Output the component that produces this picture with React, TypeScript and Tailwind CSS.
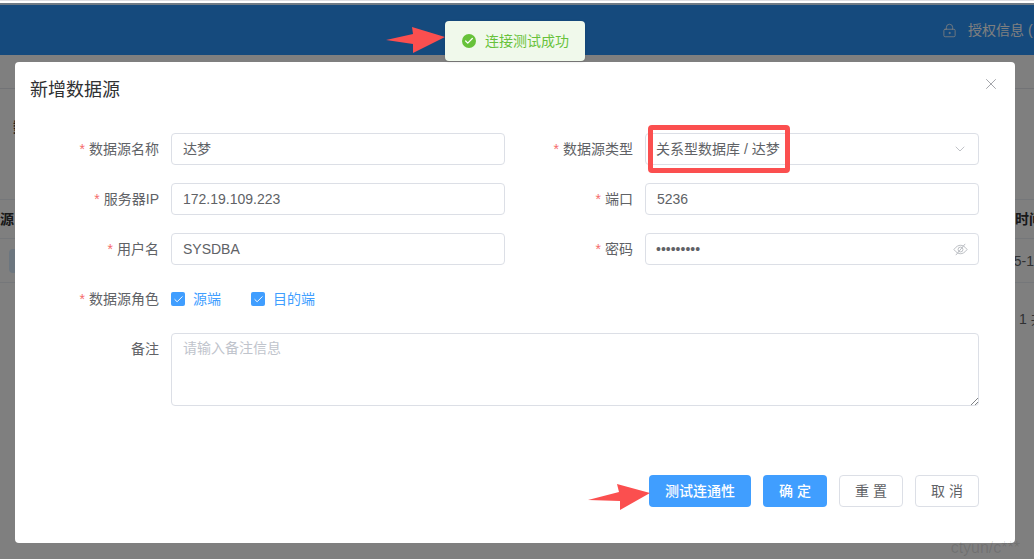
import { Check, ChevronDown, LockKeyhole, X } from 'lucide-react';

const font = 'font-["Liberation_Sans","Noto_Sans_CJK_SC",sans-serif]';

type FieldProps = {
  label: string;
  required?: boolean;
  labelWidth?: string;
  children: React.ReactNode;
};

function Field({ label, required = true, labelWidth = 'w-[144px]', children }: FieldProps) {
  return (
    <div className="flex h-8 items-center">
      <label className={`${labelWidth} shrink-0 pr-3 text-right text-sm text-[#606266]`}>
        {required && <span className="mr-1 text-[#f56c6c]">*</span>}
        {label}
      </label>
      <div className="min-w-0 flex-1">{children}</div>
    </div>
  );
}

function TextBox({ value }: { value: string }) {
  return (
    <div className="flex h-8 items-center rounded border border-[#dcdfe6] px-[11px] text-sm text-[#606266]">
      {value}
    </div>
  );
}

function Role({ label }: { label: string }) {
  return (
    <span className="flex items-center gap-2 text-sm text-[#409eff]">
      <span className="flex size-[14px] items-center justify-center rounded-[2px] bg-[#409eff]">
        <Check size={11} strokeWidth={2} className="text-white" />
      </span>
      {label}
    </span>
  );
}

function Arrow({ className, points, box }: { className: string; points: string; box: string }) {
  return (
    <svg viewBox={box} className={className}>
      <polygon points={points} fill="#fb4f4f" />
    </svg>
  );
}

export default function App() {
  return (
    <div className={`relative h-[559px] w-[1034px] overflow-hidden bg-white ${font}`}>
      {/* page behind the dialog */}
      <div className="h-[5px]" />
      <header className="flex h-[50px] items-center justify-end gap-[11px] bg-[#2a94fa] text-sm text-white">
        <LockKeyhole size={15} strokeWidth={1.3} />
        <span className="w-[66px] whitespace-nowrap">授权信息 (</span>
      </header>
      <div className="h-[34px] border-b border-[#e4e7ed]" />
      <div className="h-[110px] px-[13px] pt-7 text-sm font-bold text-[#303133]">数</div>
      <div className="flex h-[40px] items-center justify-between border-y border-[#ebeef5] text-sm font-bold text-[#303133]">
        <span>源</span>
        <span className="w-[19px] whitespace-nowrap">时间</span>
      </div>
      <div className="flex h-[44px] items-center justify-between border-b border-[#ebeef5] pl-[9px] text-sm text-[#606266]">
        <span className="h-6 w-10 rounded bg-[#d9ecff]" />
        <span className="pt-[1px]">5-1</span>
      </div>
      <div className="mt-[26px] flex justify-end text-sm text-[#606266]">
        <span className="w-[15px] whitespace-nowrap">1 共</span>
      </div>

      {/* overlay */}
      <div className="absolute inset-0 bg-black/50" />

      {/* browser edge above the page */}
      <div className="absolute inset-x-0 top-0">
        <div className="h-px bg-[#dddde2]" />
        <div className="h-[2px] bg-white" />
        <div className="h-[2px] bg-[#6f7a85]" />
      </div>

      {/* dialog */}
      <div className="absolute left-[15px] top-[62px] h-[481px] w-[1000px] rounded-sm bg-white">
        <div className="flex items-start justify-between pl-[15px] pr-[15px] pt-[17px]">
          <h2 className="text-lg leading-[22px] text-[#303133]">新增数据源</h2>
          <X size={18} strokeWidth={1.1} className="mt-[-4px] text-[#909399]" />
        </div>
        <form className="flex flex-col gap-[18px] pl-3 pr-9 pt-[32px]">
          <div className="grid grid-cols-[478px_1fr]">
            <Field label="数据源名称">
              <TextBox value="达梦" />
            </Field>
            <Field label="数据源类型" labelWidth="w-[140px]">
              <div className="flex h-8 items-center justify-between rounded border border-[#dcdfe6] pl-[10px] pr-[10px] text-sm text-[#606266]">
                关系型数据库 / 达梦
                <ChevronDown size={16} strokeWidth={1.1} className="text-[#a8abb2]" />
              </div>
            </Field>
          </div>
          <div className="grid grid-cols-[478px_1fr]">
            <Field label="服务器IP">
              <TextBox value="172.19.109.223" />
            </Field>
            <Field label="端口" labelWidth="w-[140px]">
              <div className="flex h-8 items-center rounded border border-[#dcdfe6] px-[11px] text-sm text-[#606266]">
                5236
              </div>
            </Field>
          </div>
          <div className="grid grid-cols-[478px_1fr]">
            <Field label="用户名">
              <TextBox value="SYSDBA" />
            </Field>
            <Field label="密码" labelWidth="w-[140px]">
              <div className="flex h-8 items-center justify-between rounded border border-[#dcdfe6] pl-[10px] pr-[10px] text-sm text-[#606266]">
                •••••••••
                <svg viewBox="0 0 16 16" className="size-[15px] text-[#b0b3b9]" fill="none" stroke="currentColor" strokeWidth="0.9">
                  <path d="M1 8 C3.5 4.5 6 3.5 8 3.5 C10 3.5 12.5 4.5 15 8 C12.5 11.5 10 12.5 8 12.5 C6 12.5 3.5 11.5 1 8 Z" />
                  <circle cx="8" cy="8" r="2.6" />
                  <path d="M3 14 L13 2" />
                </svg>
              </div>
            </Field>
          </div>
          <Field label="数据源角色">
            <div className="flex items-center gap-[30px]">
              <Role label="源端" />
              <Role label="目的端" />
            </div>
          </Field>
          <div className="flex">
            <label className="w-[144px] shrink-0 pr-3 pt-[6px] text-right text-sm text-[#606266]">备注</label>
            <div className="relative h-[73px] flex-1 rounded border border-[#dcdfe6] px-[11px] pt-[4px] text-sm text-[#c0c4cc]">
              请输入备注信息
              <svg viewBox="0 0 8 8" className="absolute bottom-0 right-0 size-2 text-[#606266]">
                <path d="M1 8 L8 1 M5 8 L8 5" stroke="currentColor" strokeWidth="0.8" fill="none" />
              </svg>
            </div>
          </div>
        </form>
        <div className="mt-[69px] flex justify-end gap-3 pr-9 text-sm">
          <button type="button" className="h-8 w-[102px] rounded bg-[#409eff] font-medium text-white">
            测试连通性
          </button>
          <button type="button" className="h-8 w-16 rounded bg-[#409eff] font-medium text-white">
            确 定
          </button>
          <button type="button" className="h-8 w-16 rounded border border-[#dcdfe6] bg-white text-[#606266]">
            重 置
          </button>
          <button type="button" className="h-8 w-16 rounded border border-[#dcdfe6] bg-white text-[#606266]">
            取 消
          </button>
        </div>
      </div>

      {/* watermark */}
      <div className="absolute right-[14px] top-[536px] text-base text-black/[.12]">ctyun/c***</div>

      {/* screenshot annotations */}
      <div className="absolute left-[648px] top-[125px] h-[48px] w-[142px] rounded-sm border-[5px] border-[#fb4f4f]" />
      <Arrow
        box="0 0 59 26"
        points="0,13 27,7 26,0 59,10 27,26 27,17"
        className="absolute left-[386px] top-[27px] h-[26px] w-[59px]"
      />
      <Arrow
        box="0 0 62 26"
        points="0,16 31,8 29,0 62,9 32,26 32,17"
        className="absolute left-[588px] top-[484px] h-[26px] w-[62px]"
      />

      {/* toast */}
      <div className="absolute left-[445px] top-[21px] flex h-10 w-[140px] items-center gap-[9px] rounded bg-[#f0f9eb] pl-[17px] text-sm text-[#67c23a] shadow-sm">
        <span className="flex size-[14px] items-center justify-center rounded-full bg-[#67c23a]">
          <Check size={10} strokeWidth={3} className="text-white" />
        </span>
        连接测试成功
      </div>
    </div>
  );
}
